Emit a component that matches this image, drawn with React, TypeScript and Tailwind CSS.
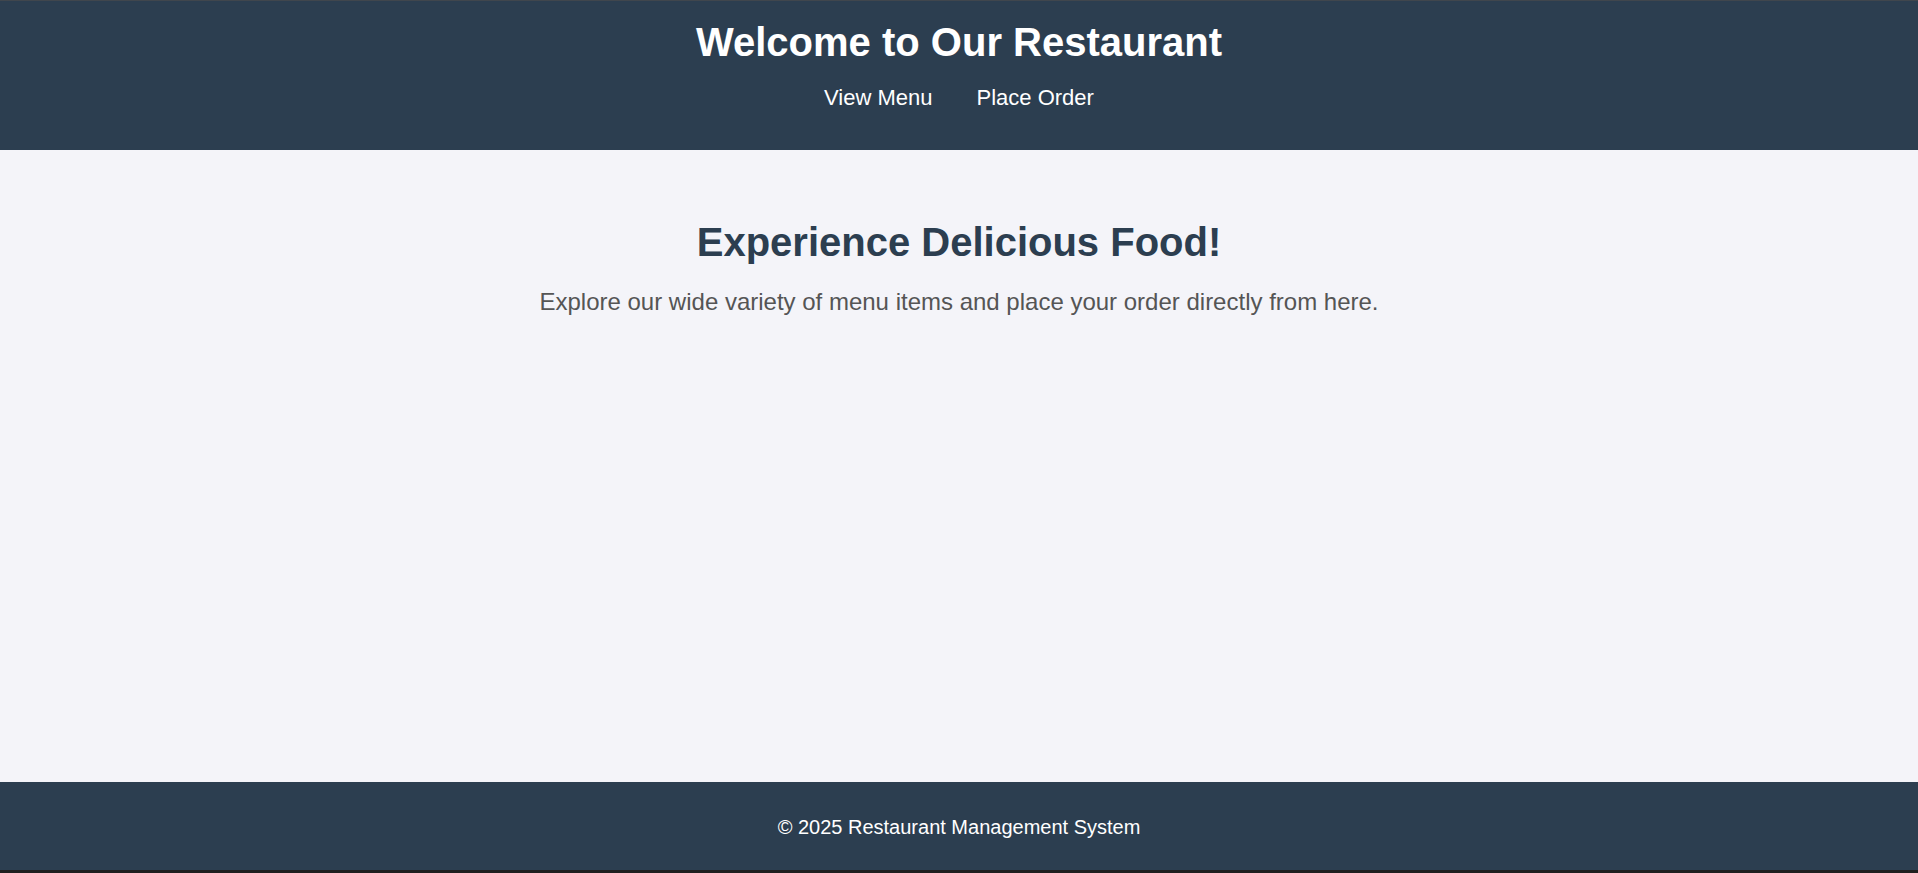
export default function App() {
  return (
    <div
      className="flex min-h-screen flex-col bg-[#f4f4f9]"
      style={{ fontFamily: '"Liberation Sans", Arial, sans-serif' }}
    >
      <header className="h-[150px] border-t border-[#40464d] bg-[#2c3e50] pt-[18px] text-center text-white">
        <h1 className="text-[40px] font-bold leading-[46px]">Welcome to Our Restaurant</h1>
        <nav className="mt-[20px] flex justify-center gap-[44px] text-[22px] leading-[25px]">
          <a href="#" className="text-white">View Menu</a>
          <a href="#" className="text-white">Place Order</a>
        </nav>
      </header>
      <main className="flex-1 pt-[69px] text-center">
        <h2 className="text-[40px] font-bold leading-[46px] text-[#2c3e50]">Experience Delicious Food!</h2>
        <p className="mt-[23px] text-[24px] leading-[28px] text-[#555]">
          Explore our wide variety of menu items and place your order directly from here.
        </p>
      </main>
      <footer className="flex h-[91px] items-center justify-center border-b-[3px] border-[#1f1f1f] bg-[#2c3e50] pt-[2px] text-[20px] text-white">
        © 2025 Restaurant Management System
      </footer>
    </div>
  );
}
